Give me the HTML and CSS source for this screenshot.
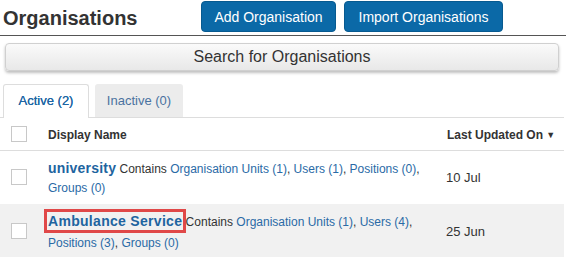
FILE: index.html
```html
<!DOCTYPE html>
<html>
<head>
<meta charset="utf-8">
<link rel="stylesheet" href="styles.css">
</head>
<body>
<div class="page-head">
  <h1 class="title">Organisations</h1>
  <div class="actions">
    <button class="btn btn-primary add">Add Organisation</button>
    <button class="btn btn-primary import">Import Organisations</button>
  </div>
</div>
<div class="search-wrap">
  <button class="search-btn">Search for Organisations</button>
</div>
<ul class="tabs">
  <li class="tab active">Active (2)</li>
  <li class="tab">Inactive (0)</li>
</ul>
<table class="grid">
  <thead>
    <tr>
      <th class="c-check"><span class="cb"></span></th>
      <th class="c-name">Display Name</th>
      <th class="c-date">Last Updated On <span class="caret">&#9660;</span></th>
    </tr>
  </thead>
  <tbody>
    <tr>
      <td class="c-check"><span class="cb"></span></td>
      <td class="c-name"><a class="org">university</a> Contains <a>Organisation Units (1)</a>, <a>Users (1)</a>, <a>Positions (0)</a>, <a>Groups (0)</a></td>
      <td class="c-date">10 Jul</td>
    </tr>
    <tr class="alt">
      <td class="c-check"><span class="cb"></span></td>
      <td class="c-name"><a class="org boxed">Ambulance Service</a> Contains <a>Organisation Units (1)</a>, <a>Users (4)</a>, <a>Positions (3)</a>, <a>Groups (0)</a></td>
      <td class="c-date">25 Jun</td>
    </tr>
  </tbody>
</table>
</body>
</html>
```
FILE: styles.css
```css
html, body {
  margin: 0;
  padding: 0;
  background: #fff;
  font-family: "Liberation Sans", Arial, sans-serif;
  color: #333;
}
.page-head {
  display: flex;
  align-items: flex-start;
  height: 35px;
  border-bottom: 1px solid #555;
  box-sizing: content-box;
}
.title {
  margin: 0;
  padding: 6px 0 0 3px;
  font-size: 20px;
  font-weight: bold;
  color: #333;
  line-height: 24px;
  width: 198px;
}
.actions {
  display: flex;
  gap: 8px;
  padding-top: 1px;
}
.btn {
  font-family: "Liberation Sans", Arial, sans-serif;
  font-size: 14px;
  color: #fff;
  background: #0b69a7;
  border: 1px solid #075a90;
  border-radius: 4px;
  height: 31px;
  padding: 0;
  cursor: pointer;
}
.btn.add { width: 135px; }
.btn.import { width: 159px; }
.search-wrap {
  padding: 7px 7px 0 5px;
}
.search-btn {
  display: block;
  width: 100%;
  height: 28px;
  font-family: "Liberation Sans", Arial, sans-serif;
  font-size: 16px;
  color: #333;
  background: linear-gradient(#fafafa, #e8e8e8);
  border: 1px solid #d0d0d0;
  border-radius: 4px;
  box-shadow: 0 2px 3px rgba(0,0,0,0.25);
  padding: 0;
}
.tabs {
  list-style: none;
  margin: 13px 2px 0 0;
  padding: 0 0 0 3px;
  display: flex;
  gap: 6px;
  border-bottom: 1px solid #ddd;
  height: 33px;
}
.tab {
  font-size: 13px;
  color: #4a72a0;
  background: #ececec;
  border: 1px solid #ececec;
  border-bottom: none;
  border-radius: 3px 3px 0 0;
  width: 88px;
  box-sizing: border-box;
  text-align: center;
  line-height: 32px;
  height: 33px;
}
.tab.active {
  width: 86px;
  background: #fff;
  color: #1f65a3;
  border-color: #ddd;
  height: 34px;
  text-shadow: 0 0 0.3px #1f65a3;
}
.grid {
  border-collapse: collapse;
  width: 564px;
  font-size: 12px;
}
.grid th {
  text-align: left;
  font-weight: bold;
  height: 32px;
  border-bottom: 1px solid #ddd;
  padding: 3px 0 0 0;
  box-sizing: border-box;
  vertical-align: middle;
  color: #333;
}
.grid th.c-check { padding-top: 0; }
.grid td {
  padding: 0;
  vertical-align: middle;
}
.c-check { width: 48px; }
.cb {
  display: block;
  width: 14px;
  height: 14px;
  border: 1px solid #c8c8c8;
  background: #fff;
  margin-left: 11px;
}
.c-name { width: 398px; }
.c-date { width: 118px; }
.grid th.c-date { padding-left: 1px; }
.caret { font-size: 9px; position: relative; top: -1px; }
.grid tbody tr { height: 52px; }
.grid tbody td.c-name {
  padding: 8px 10px 6px 0;
  line-height: 19px;
  color: #333;
  box-sizing: border-box;
}
.grid tbody tr.alt { background: #f1f1f1; height: 54px; }
.grid tbody tr.alt td.c-name { padding-top: 7px; padding-bottom: 5px; line-height: 21px; }
.grid a { color: #2a6aa6; text-decoration: none; }
.grid a.org {
  font-size: 14px;
  font-weight: bold;
  color: #1e64a0;
  letter-spacing: 0.2px;
}
.grid a.boxed {
  outline: 3px solid #e04848;
  outline-offset: 1px;
  letter-spacing: 0.3px;
}
.grid tbody td.c-date { color: #333; font-size: 13px; }
```
